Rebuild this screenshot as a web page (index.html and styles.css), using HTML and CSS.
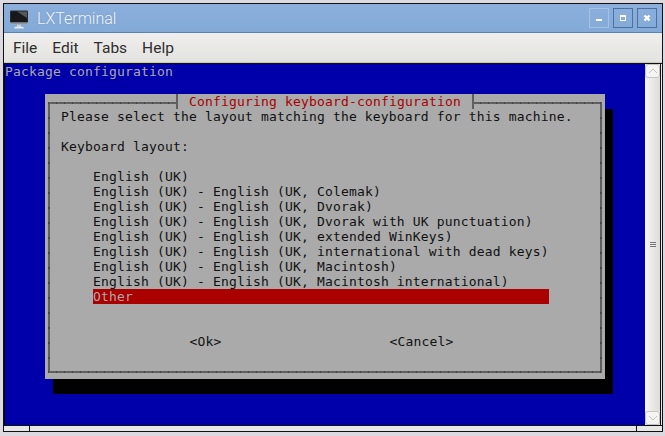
FILE: index.html
```html
<!DOCTYPE html>
<html lang="en">
<head>
<meta charset="utf-8">
<title>LXTerminal</title>
<link rel="stylesheet" href="styles.css">
</head>
<body>
<div class="window">
  <header class="titlebar">
    <svg class="app-icon" width="20" height="20" viewBox="0 0 20 20">
      <defs>
        <linearGradient id="stand" x1="0" y1="0" x2="0" y2="1"><stop offset="0" stop-color="#8f9498"/><stop offset="1" stop-color="#eef0f2"/></linearGradient>
      </defs>
      <rect x="1" y="0.500" width="18" height="13" rx="1" fill="#2a2c2e"/>
      <rect x="2" y="1.500" width="16" height="10.500" fill="#17181a"/>
      <path d="M8 1.500h10v6.500z" fill="#55585b"/>
      <rect x="1" y="12.500" width="18" height="1" fill="#b9bdc0"/>
      <rect x="8" y="13.500" width="4" height="3" fill="url(#stand)"/>
      <path d="M5 18.500q0-2 3-2h4q3 0 3 2z" fill="#e4e6e8"/>
    </svg>
    <span class="title">LXTerminal</span>
    <div class="controls">
      <span class="ctl ctl-active"><svg width="8" height="8" viewBox="0 0 8 8"><rect x="1" y="5" width="6" height="2" fill="#fff"/></svg></span>
      <span class="ctl"><svg width="8" height="8" viewBox="0 0 8 8"><path d="M1 1h6v6H1z M2 3v3h4V3z" fill="#fff" fill-rule="evenodd"/></svg></span>
      <span class="ctl"><svg width="8" height="8" viewBox="0 0 8 8"><path d="M1.500 1.500l5 5M6.500 1.500l-5 5" stroke="#fff" stroke-width="2.400"/></svg></span>
    </div>
  </header>
  <nav class="menubar">
    <span>File</span><span>Edit</span><span>Tabs</span><span>Help</span>
  </nav>
  <main class="content">
    <section class="terminal">
      <div class="screen-title">Package configuration</div>
      <div class="dialog">
        <div class="frame">
          <div class="frame-title"><span>Configuring keyboard-configuration</span></div>
          <p class="line">Please select the layout matching the keyboard for this machine.</p>
          <p class="line label">Keyboard layout:</p>
          <ul class="options">
            <li>English (UK)</li>
            <li>English (UK) - English (UK, Colemak)</li>
            <li>English (UK) - English (UK, Dvorak)</li>
            <li>English (UK) - English (UK, Dvorak with UK punctuation)</li>
            <li>English (UK) - English (UK, extended WinKeys)</li>
            <li>English (UK) - English (UK, international with dead keys)</li>
            <li>English (UK) - English (UK, Macintosh)</li>
            <li>English (UK) - English (UK, Macintosh international)</li>
            <li class="selected">Other</li>
          </ul>
          <div class="buttons"><span>&lt;Ok&gt;</span><span>&lt;Cancel&gt;</span></div>
        </div>
      </div>
    </section>
    <aside class="scrollbar">
      <span class="arrow"><svg width="10" height="6" viewBox="0 0 10 6"><path d="M1 5l4-4 4 4" fill="none" stroke="#c4c4c4" stroke-width="1"/></svg></span>
      <span class="thumb"><i></i><i></i><i></i></span>
      <span class="arrow"><svg width="10" height="6" viewBox="0 0 10 6"><path d="M1 1l4 4 4-4" fill="none" stroke="#c4c4c4" stroke-width="1"/></svg></span>
    </aside>
  </main>
  <footer class="statusbar"><span class="cell-a"></span><span class="cell-b"></span><span class="cell-c"></span></footer>
</div>
</body>
</html>
```
FILE: styles.css
```css
* { box-sizing: border-box; }
html, body { margin: 0; padding: 0; }
body { width: 665px; height: 436px; overflow: hidden; background: #dcdae0; }

.window {
  margin: 3px 0 0 3px;
  width: 660px;
  height: 429px;
  border: 1px solid #111;
  border-width: 1px 1px 0 1px;
  display: flex;
  flex-direction: column;
  background: #e8e8e6;
  font-family: Roboto, "Liberation Sans", sans-serif;
}

.titlebar {
  height: 29px;
  flex: none;
  display: flex;
  align-items: center;
  padding: 0 5px 0 5px;
  background: linear-gradient(#8cafdc, #83aad7);
  border-bottom: 1px solid #5a82b4;
}
.app-icon { flex: none; margin-right: 8px; margin-top: 3px; }
.title { color: #f2f6fb; font-size: 16px; font-weight: 300; text-shadow: 0 0 2px #6c8fbc; }
.controls { margin-left: auto; display: flex; gap: 4px; }
.ctl {
  width: 20px;
  height: 20px;
  display: flex;
  align-items: center;
  justify-content: center;
  border: 1px solid #4c709f;
}
.ctl-active { border-color: #a5c2e4; }

.menubar {
  height: 30px;
  flex: none;
  display: flex;
  align-items: center;
  gap: 15px;
  padding: 1px 9px 0 9px;
  color: #2e2e2e;
  font-size: 15.500px;
  background: linear-gradient(#efeeec, #e3e3e0);
  border-bottom: 1px solid #c8c8c4;
}

.content { flex: 1; display: flex; min-height: 0; border-top: 1px solid #111; }

.terminal {
  width: 641px;
  flex: none;
  background: #0000aa;
  border-left: 1px solid #000;
  font-family: "DejaVu Sans Mono", monospace;
  font-size: 13px;
  letter-spacing: 0.17px;
  line-height: 15px;
  overflow: hidden;
}
.screen-title { color: #aaaaaa; height: 15px; }

.dialog {
  width: 560px;
  height: 285px;
  margin: 15px 0 0 40px;
  padding: 8px 3px 6px;
  background: #aaaaaa;
  box-shadow: 8px 15px 0 #000;
  color: #111;
}
.frame {
  height: 271px;
  padding: 2px 2px 2px 13px;
  background:
    repeating-linear-gradient(90deg, #454545 0 1px, #5f5f5f 1px 8px) 0 0 / 100% 2px no-repeat,
    repeating-linear-gradient(90deg, #454545 0 1px, #5f5f5f 1px 8px) 0 100% / 100% 2px no-repeat,
    repeating-linear-gradient(180deg, #454545 0 2px, #5f5f5f 2px 15px) 0 0 / 2px 100% no-repeat,
    repeating-linear-gradient(180deg, #454545 0 2px, #5f5f5f 2px 15px) 100% 0 / 2px 100% no-repeat;
}
.frame-title {
  height: 15px;
  margin: -10px 0 0 115px;
  width: 298px;
  background: #aaaaaa;
  border-left: 2px solid #5f5f5f;
  border-right: 2px solid #5f5f5f;
  text-align: center;
  color: #aa0000;
}
.line { margin: 0; height: 15px; white-space: pre; }
.label { margin-top: 15px; }
.options { list-style: none; margin: 15px 0 0 32px; padding: 0; width: 456px; }
.options li { height: 15px; white-space: pre; }
.options .selected { background: #aa0000; color: #aaaaaa; }
.buttons { display: flex; gap: 168px; margin: 30px 0 0 128.500px; }

.scrollbar {
  width: 16px;
  flex: none;
  display: flex;
  flex-direction: column;
  background: #e9e9e7;
  border-right: 1px solid #111;
}
.arrow {
  height: 14px;
  flex: none;
  display: flex;
  align-items: center;
  justify-content: center;
  background: #f4f4f2;
  border: 1px solid #c4c4c4;
  border-radius: 3px;
}
.thumb {
  flex: 1;
  display: flex;
  flex-direction: column;
  align-items: center;
  justify-content: center;
  gap: 1px;
  background: linear-gradient(90deg, #f5f5f3, #dcdcda);
}
.thumb i { display: block; width: 6px; height: 1px; background: #777; }

.statusbar {
  height: 7px;
  flex: none;
  display: flex;
  background: #e8e8e6;
  border-top: 1px solid #111;
  border-bottom: 1px solid #111;
}
.cell-a { width: 26px; border-right: 1px solid #111; }
.cell-b { flex: 1; border-right: 1px solid #111; }
.cell-c { width: 25px; }
```
